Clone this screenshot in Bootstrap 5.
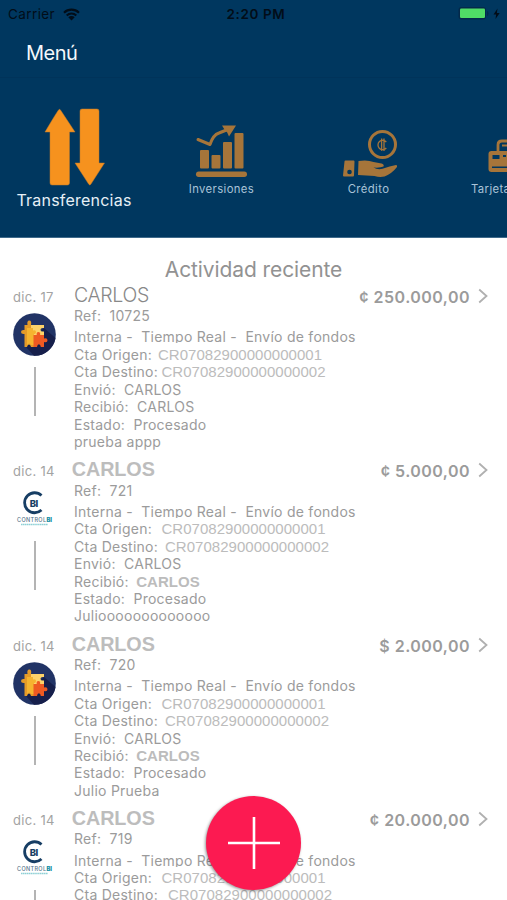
<!DOCTYPE html>
<html lang="es">
<head>
<meta charset="utf-8">
<meta name="viewport" content="width=device-width, initial-scale=1">
<title>Menú</title>
<link href="https://cdn.jsdelivr.net/npm/bootstrap@5.3.0/dist/css/bootstrap.min.css" rel="stylesheet">
<style>
body{font-family:Inter,"Liberation Sans",sans-serif;background:#fff;color:#9b9b9b;height:900px;overflow:hidden}
.screen{width:507px;height:900px}
.top-area{background:#00375f;height:238px;border-bottom:1px solid #3f6a8b}
.status{height:28px;font-size:13.5px;line-height:28px;color:#020d18}
.status > *{flex:1 1 0;min-width:0}
.carrier{letter-spacing:.4px}
.clock{font-weight:600;letter-spacing:.6px;padding-right:3px}
.title{height:50px;padding-left:26px;font-size:20px;line-height:50px;letter-spacing:-.5px;color:#f4f8fb;border-bottom:1px solid #00335a}
.menu-strip{height:159px}
.tile{flex:none;color:#fff;text-align:center;white-space:nowrap}
.tile svg{display:block;margin:0 auto}
.tile-main{width:148px;padding-top:30px;font-size:16px;line-height:25px;letter-spacing:.22px;color:#e6eff6}
.tile-side{width:147px;font-size:11.3px;line-height:19px;letter-spacing:.38px;color:#a9c3d8;padding-top:46px}
.tile-last{text-align:left;padding-left:29px}
.tile-last svg{margin:0 0 0 17px}
.heading{height:47px;padding-top:16px;font-size:21px;line-height:31px;letter-spacing:-.1px;color:#929292}
.entry{height:174.4px}
.aside{width:74px;padding-left:13px;padding-top:2px;flex:none}
.date{font-size:13px;line-height:20px;letter-spacing:.3px;height:26px;color:#a3a3a3}
.avatar{width:43px;height:43px}
.stem{width:2px;height:49px;background:#b4b4b4;margin:11px 0 0 20.5px}
.who{font-size:19.5px;line-height:20px;height:22px;letter-spacing:-.35px;font-weight:300;color:#888}
.who-b{font:700 19.8px/20px "Liberation Sans",Arial,sans-serif;letter-spacing:-.1px;color:#bdbdbd;margin-left:-2.2px}
.ln{height:17.45px;line-height:17.45px;font-size:14px;white-space:pre;letter-spacing:.25px}
.ref{margin-top:.2px;margin-bottom:3.8px}
.cut{overflow:hidden;height:15px;margin-bottom:2.45px}
.acc{font:15px/18px "Liberation Sans",Arial,sans-serif;color:#bcbcbc;letter-spacing:.03px}
.nm{font:700 15px/1 "Liberation Sans",Arial,sans-serif;color:#bcbcbc;letter-spacing:.05px;margin-left:-1px}
.amount{font-weight:600;font-size:16px;line-height:24px;letter-spacing:.46px;height:22px;white-space:nowrap}
.chev{width:10px;height:16px;margin:3px 19px 0 8px}
.fab{left:206px;top:796px;width:95px;height:94px;background:#fc1a51;border:0;box-shadow:-1px 1px 3px rgba(0,0,0,.4)}
</style>
<script src="https://cdn.jsdelivr.net/npm/bootstrap@5.3.0/dist/js/bootstrap.bundle.min.js"></script>
</head>
<body>
<svg width="0" height="0" class="position-absolute">
<defs>
<symbol id="puzzle" viewBox="0 0 43 43"><circle cx="21.5" cy="21.5" r="21.3" fill="#213365"/><path d="M31 15L42.500 25A21.300 21.300 0 0 1 21 42.800L13 34z" fill="#161f4b"/><path d="M11.500 12h3q-.8-4.500 1.800-4.500t1.700 4.500H22v22h-4q-.5-2.500-2-2.500t-2 2.500h-2.500V21q-3.500.5-3.500-2t3.500-2z" fill="#e59b28"/><path d="M18 12h13v3q-3.500-.6-3.500 1.700t3.500 1.800v5.500H18z" fill="#fdd36a"/><path d="M14 15h6v2.500q3-.8 3 1.500t-2 2v11h-3q-1.500-3-4 0z" fill="#f6b42f"/><path d="M20.500 22h3.200q-.5-3 1.700-3t1.700 3H31v3.500q3.500-.8 3.500 1.800T31 29v5h-3.200q-.3-2.800-1.900-2.800t-1.900 2.800h-3.500z" fill="#ee5a22"/></symbol>
<symbol id="cbi" viewBox="0 0 43 43"><path d="M28.500 8.500A10 10 0 1 0 28.500 23" fill="none" stroke="#173e64" stroke-width="2.800"/><text x="16.700" y="19.500" font-family="Inter" font-weight="800" font-size="9.500" letter-spacing="-.5" fill="#173e64">BI</text><text x="4" y="34.500" font-family="Inter" font-size="5.500" font-weight="500" textLength="29" fill="#56748a">CONTROL</text><text x="33.500" y="34.500" font-family="Inter" font-size="5.500" font-weight="900" textLength="5.500" lengthAdjust="spacingAndGlyphs" fill="#1690a5">BI</text><path d="M8 37.500h27" stroke="#8fd0d5" stroke-width="1.400" stroke-dasharray="1.500 .4"/></symbol>
<symbol id="chev" viewBox="0 0 10 16"><path d="M1.200 1.500L8.500 8l-7.300 6.500" fill="none" stroke="#b0b0b0" stroke-width="1.800"/></symbol>
</defs>
</svg>
<main class="screen position-relative overflow-hidden">
<header class="top-area overflow-hidden">
<div class="status d-flex">
<div class="d-flex align-items-center ps-2 carrier">Carrier<svg class="ms-2" width="17" height="13" viewBox="0 0 17 13"><path d="M1 4.700a10.800 10.800 0 0 1 15 0M3.700 7.400a7 7 0 0 1 9.600 0" fill="none" stroke="#020d18" stroke-width="2.100"/><path d="M5.300 9.300a4.600 4.600 0 0 1 6.400 0L8.500 12.500z" fill="#020d18"/></svg></div>
<div class="text-center clock">2:20 PM</div>
<div class="d-flex align-items-center justify-content-end"><svg width="49" height="15" viewBox="0 0 49 15"><rect x=".5" y="0" width="27.500" height="12.500" rx="3" fill="#04294a"/><rect x="2" y="1.500" width="25" height="9.500" rx="1.300" fill="#50dc66"/><path d="M29 4v5q1.500-.4 1.500-2.500t-1.500-2.500z" fill="#04294a"/><path d="M39.500 1.500L35.500 7.500h2.600L37.500 12l4.200-6h-2.800z" fill="#020d18"/></svg></div>
</div>
<div class="title">Menú</div>
<nav class="menu-strip d-flex">
<div class="tile tile-main"><svg width="62" height="80" viewBox="0 0 62 80"><path d="M17.500 2L32 24H26.500v51q0 2-2 2H9q-2 0-2-2V24H2Q15 2 16 1.500q.8-.5 1.500.5zM39 1h15q2 0 2 2v52h5.500L48 76q-1.200 2-2.400 0L32 55h5V3q0-2 2-2z" fill="#f6921e" stroke="#bc7a2e" stroke-width=".5"/></svg>Transferencias</div>
<div class="tile tile-side"><svg width="53" height="56" viewBox="0 0 53 56"><g fill="#a6753a"><rect x="5" y="26" width="9" height="18.500" rx="1"/><rect x="16.500" y="31" width="9" height="13.500" rx="1"/><rect x="28" y="18" width="9" height="26.500" rx="1"/><rect x="39.500" y="9" width="9" height="35.500" rx="1"/><rect x="1" y="47.500" width="51" height="5.500" rx="2.700"/><path d="M27 1.500h14l-7 11-1.800-4-3-3.500z"/></g><path d="M3 15.500l12 5Q18 11 24 9L34 5" fill="none" stroke="#a6753a" stroke-width="3" stroke-linejoin="round" stroke-linecap="round"/></svg>Inversiones</div>
<div class="tile tile-side"><svg class="overflow-visible" width="55" height="56" viewBox="-2 -1 55 56"><g fill="#a6753a"><path d="M2.500 35.500h8q1 0 1 1l-.5 14q0 1-1 1H1q-1 0-1-1l1.500-14q0-1 1-1z"/><path d="M15.500 36q9-1.500 15 1l8 1.500q3 1 2 3-3 1.500-10 1 4 2.500 9 1.300Q47 41 53 40q1.500 0 1 2-5 6.500-12.500 9.500-5 1-10-.5L15 50z"/></g><circle cx="6.500" cy="47" r="2.300" fill="#00375f"/><circle cx="39.500" cy="19.500" r="13" fill="none" stroke="#a6753a" stroke-width="3"/><path d="M43.300 23a4.700 4.700 0 1 1 0-6M38.600 13.500v12.500M41 13.500v12.500" fill="none" stroke="#a6753a" stroke-width="1.300"/></svg>Crédito</div>
<div class="tile tile-side tile-last"><svg width="55" height="56" viewBox="0 0 55 56"><path d="M10 28v-7q0-4 4-4h34v25H40" fill="none" stroke="#a6753a" stroke-width="2.800"/><path d="M14 21.500h34" stroke="#a6753a" stroke-width="2.200"/><rect x=".5" y="27" width="40" height="21" rx="3" fill="#a6753a"/><path d="M4.500 31h7v4h-7zM15 31h3v2h-3zM4 42.500h30V44H4z" fill="#00375f"/></svg>Tarjetas</div>
</nav>
</header>
<h1 class="heading text-center mb-0 fw-normal">Actividad reciente</h1>
<section id="list"></section>
<button class="fab position-absolute rounded-circle d-flex align-items-center justify-content-center p-0" aria-label="Agregar"><svg width="54" height="54" viewBox="0 0 54 54"><path d="M27 1v52M1 27h52" stroke="#fff" stroke-width="2.600"/></svg></button>
</main>
<script>
const entries=[
 {d:'17',i:'puzzle',ref:'10725',a:'¢ 250.000,00',note:'prueba appp',bold:false,o:158,t:161.5},
 {d:'14',i:'cbi',ref:'721',a:'¢ 5.000,00',note:'Juliooooooooooooo',bold:true,o:161.5,t:165},
 {d:'14',i:'puzzle',ref:'720',a:'$ 2.000,00',note:'Julio Prueba',bold:true,o:161.5,t:165},
 {d:'14',i:'cbi',ref:'719',a:'¢ 20.000,00',note:'',bold:true,o:161.5,t:168}
];
document.getElementById('list').innerHTML=entries.map(e=>`
<article class="entry d-flex">
 <div class="aside"><div class="date">dic. ${e.d}</div><svg class="avatar d-block"><use href="#${e.i}"/></svg><div class="stem"></div></div>
 <div class="flex-grow-1">
  <div class="d-flex justify-content-between">
   <div class="who ${e.bold?'who-b':''}">CARLOS</div>
   <div class="d-flex"><div class="amount">${e.a}</div><svg class="chev"><use href="#chev"/></svg></div>
  </div>
  <div class="ln ref">Ref:  ${e.ref}</div>
  <div class="ln cut">Interna -  Tiempo Real -  Envío de fondos</div>
  <div class="ln d-flex"><span style="width:${e.o-74}px">Cta Origen:</span><span class="acc">CR07082900000000001</span></div>
  <div class="ln d-flex"><span style="width:${e.t-74}px">Cta Destino:</span><span class="acc">CR07082900000000002</span></div>
  <div class="ln">Envió:  CARLOS</div>
  <div class="ln">Recibió:  ${e.bold?'<span class="nm">CARLOS</span>':'CARLOS'}</div>
  <div class="ln">Estado:  Procesado</div>
  <div class="ln">${e.note}</div>
 </div>
</article>`).join('');
</script>
</body>
</html>
